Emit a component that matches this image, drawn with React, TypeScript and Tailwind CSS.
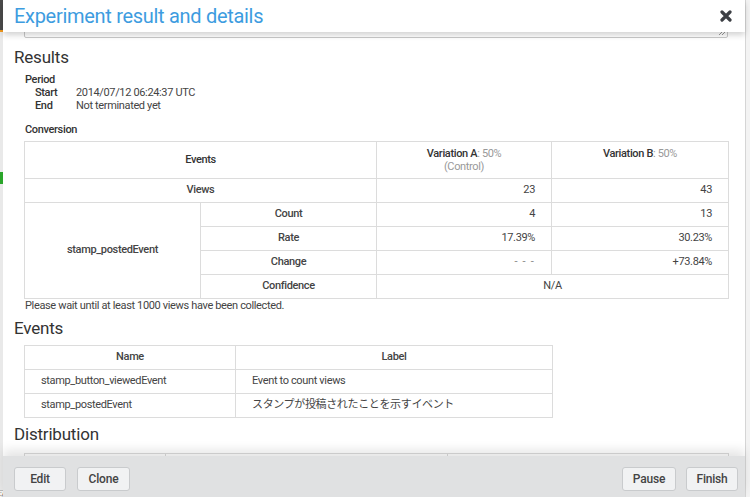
import React from "react";

const font = { fontFamily: "Roboto, 'Noto Sans CJK JP', sans-serif" };

function Btn({ children, className = "" }: { children: React.ReactNode; className?: string }) {
  return (
    <button
      className={`h-[24px] rounded-[3px] border border-[#c9cbcd] bg-[#f1f2f3] text-[12px] font-medium tracking-[-0.2px] text-[#444] ${className}`}
    >
      {children}
    </button>
  );
}

export default function App() {
  const td = "border border-[#dcdcdc] h-[24px] px-[16px] text-[11px] tracking-[-0.35px] text-[#444]";
  return (
    <div className="relative w-[750px] h-[497px] overflow-hidden bg-[#e9e9e9]" style={font}>
      {/* background page hints */}
      <div className="absolute left-0 top-0 w-[4px] h-[30px] bg-[#4b4b4b]" />
      <div className="absolute left-0 top-[30px] w-[4px] h-[2px] bg-[#f39a1f]" />
      <div className="absolute left-0 top-[172px] w-[4px] h-[12px] bg-[#2aa52a]" />
      <div className="absolute right-0 top-0 w-[5px] h-[497px] bg-[#f3f3f3] border-l border-[#d5d5d5]" />

      {/* modal */}
      <div className="absolute left-[3px] top-0 w-[742px] h-[497px] bg-white flex flex-col">
        <div className="relative z-10 h-[32px] shrink-0 bg-white flex items-center justify-between pl-[11px] pr-[13px] shadow-[0_3px_6px_rgba(0,0,0,0.18)]">
          <h1 className="text-[20px] text-[#3d9ce0] leading-none tracking-[-0.3px]">Experiment result and details</h1>
          <svg width="12" height="12" viewBox="0 0 12 12">
            <path d="M2 2 L10 10 M10 2 L2 10" stroke="#3c3f44" strokeWidth="3.2" strokeLinecap="round" />
          </svg>
        </div>

        <div className="flex-1 overflow-hidden pl-[11px] pr-[17px]">
          <div className="ml-[10px] mt-[-34px] h-[40px] border border-[#c9c9c9] rounded-[2px] relative">
            <svg className="absolute right-[1px] bottom-[1px]" width="8" height="8" viewBox="0 0 8 8">
              <path d="M1 7 L7 1 M4 7 L7 4" stroke="#999" strokeWidth="1" />
            </svg>
          </div>

          <h2 className="mt-[8px] text-[17px] leading-[22px] text-[#333] tracking-[-0.2px]">Results</h2>
          <div className="ml-[11px] mt-[5px] text-[11px] leading-[13px] tracking-[-0.35px] text-[#444]">
            <div className="font-medium text-[#333]">Period</div>
            <div className="flex pl-[10px]">
              <span className="w-[41px] font-medium text-[#333]">Start</span>
              <span>2014/07/12 06:24:37 UTC</span>
            </div>
            <div className="flex pl-[10px]">
              <span className="w-[41px] font-medium text-[#333]">End</span>
              <span>Not terminated yet</span>
            </div>
            <div className="mt-[11px] font-medium text-[#333]">Conversion</div>
          </div>

          <table className="ml-[10px] mt-[5px] w-[704px] border-collapse table-fixed">
            <colgroup>
              <col className="w-[176px]" />
              <col className="w-[176px]" />
              <col className="w-[175px]" />
              <col className="w-[177px]" />
            </colgroup>
            <tbody>
              <tr>
                <th colSpan={2} className="border border-[#dcdcdc] h-[37px] text-[11px] tracking-[-0.35px] font-medium text-[#333] align-middle">Events</th>
                <th className="border border-[#dcdcdc] h-[37px] pt-[5px] text-[11px] tracking-[-0.35px] font-normal leading-[13px] text-[#999] align-top">
                  <span className="font-medium text-[#333]">Variation A</span>: 50%
                  <br />
                  (Control)
                </th>
                <th className="border border-[#dcdcdc] h-[37px] pt-[5px] text-[11px] tracking-[-0.35px] font-normal leading-[13px] text-[#999] align-top">
                  <span className="font-medium text-[#333]">Variation B</span>: 50%
                </th>
              </tr>
              <tr>
                <th colSpan={2} className={`${td} font-medium text-[#333]`}>Views</th>
                <td className={`${td} text-right`}>23</td>
                <td className={`${td} text-right`}>43</td>
              </tr>
              <tr>
                <th rowSpan={4} className={`${td} font-medium text-[#333]`}>stamp_postedEvent</th>
                <th className={`${td} font-medium text-[#333]`}>Count</th>
                <td className={`${td} text-right`}>4</td>
                <td className={`${td} text-right`}>13</td>
              </tr>
              <tr>
                <th className={`${td} font-medium text-[#333]`}>Rate</th>
                <td className={`${td} text-right`}>17.39%</td>
                <td className={`${td} text-right`}>30.23%</td>
              </tr>
              <tr>
                <th className={`${td} font-medium text-[#333]`}>Change</th>
                <td className={`${td} text-right`}>
                  <span className="tracking-[1.2px] text-[#888]">- - -</span>
                </td>
                <td className={`${td} text-right`}>+73.84%</td>
              </tr>
              <tr>
                <th className={`${td} font-medium text-[#333]`}>Confidence</th>
                <td colSpan={2} className={`${td} text-center`}>N/A</td>
              </tr>
            </tbody>
          </table>
          <p className="ml-[11px] mt-0 text-[11px] leading-[13px] tracking-[-0.35px] text-[#444]">Please wait until at least 1000 views have been collected.</p>

          <h2 className="mt-[5px] text-[17px] leading-[22px] text-[#333] tracking-[-0.2px]">Events</h2>
          <table className="ml-[10px] mt-[6px] w-[528px] border-collapse table-fixed">
            <colgroup>
              <col className="w-[211px]" />
              <col className="w-[317px]" />
            </colgroup>
            <tbody>
              <tr>
                <th className={`${td} font-medium text-[#333]`}>Name</th>
                <th className={`${td} font-medium text-[#333]`}>Label</th>
              </tr>
              <tr>
                <td className={td}>stamp_button_viewedEvent</td>
                <td className={td}>Event to count views</td>
              </tr>
              <tr>
                <td className={td}>stamp_postedEvent</td>
                <td className={`${td} text-[11px] tracking-[-0.7px] text-[#222]`}>スタンプが投稿されたことを示すイベント</td>
              </tr>
            </tbody>
          </table>

          <h2 className="mt-[5px] text-[17px] leading-[22px] text-[#333] tracking-[-0.2px]">Distribution</h2>
          <table className="ml-[10px] mt-[8px] w-[704px] border-collapse table-fixed">
            <colgroup>
              <col className="w-[141px]" />
              <col className="w-[282px]" />
              <col className="w-[281px]" />
            </colgroup>
            <tbody>
              <tr>
                <td className={td}></td>
                <td className={td}></td>
                <td className={td}></td>
              </tr>
            </tbody>
          </table>
        </div>

        <div className="relative z-10 h-[41px] shrink-0 bg-[#e0e1e2] flex items-start justify-between pt-[11px] pl-[11px] pr-[7px] shadow-[0_-6px_10px_rgba(0,0,0,0.10)]">
          <div className="flex gap-[11px]">
            <Btn className="w-[52px]">Edit</Btn>
            <Btn className="w-[53px]">Clone</Btn>
          </div>
          <div className="flex gap-[10px]">
            <Btn className="w-[54px]">Pause</Btn>
            <Btn className="w-[52px]">Finish</Btn>
          </div>
        </div>
      </div>

      <div className="absolute left-0 bottom-0 h-[7px] w-[47px] bg-[#f4f4f4] border-t border-r border-[#bbb] rounded-tr-[2px] text-[7px] leading-[6px] text-[#333] overflow-hidden whitespace-nowrap">
        :/?locale=ja#
      </div>
    </div>
  );
}
